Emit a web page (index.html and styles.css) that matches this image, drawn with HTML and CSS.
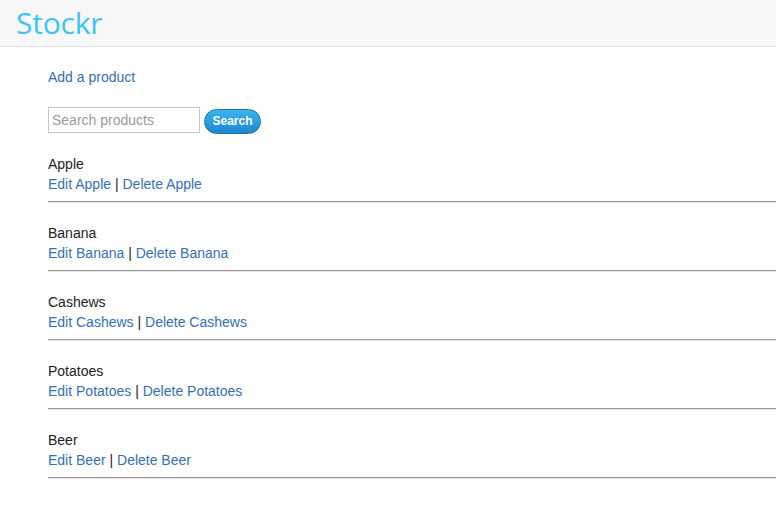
FILE: index.html
```html
<!DOCTYPE html>
<html>
<head>
<meta charset="utf-8">
<link rel="stylesheet" href="styles.css">
</head>
<body>
<header class="topbar"><span class="brand">Stockr</span></header>
<main class="content">
  <div class="add"><a href="#">Add a product</a></div>
  <form class="search">
    <input type="text" placeholder="Search products">
    <button type="button">Search</button>
  </form>
  <div class="item">
    <div class="name">Apple</div>
    <div class="links"><a href="#">Edit Apple</a> | <a href="#">Delete Apple</a></div>
    <hr>
  </div>
  <div class="item">
    <div class="name">Banana</div>
    <div class="links"><a href="#">Edit Banana</a> | <a href="#">Delete Banana</a></div>
    <hr>
  </div>
  <div class="item">
    <div class="name">Cashews</div>
    <div class="links"><a href="#">Edit Cashews</a> | <a href="#">Delete Cashews</a></div>
    <hr>
  </div>
  <div class="item">
    <div class="name">Potatoes</div>
    <div class="links"><a href="#">Edit Potatoes</a> | <a href="#">Delete Potatoes</a></div>
    <hr>
  </div>
  <div class="item">
    <div class="name">Beer</div>
    <div class="links"><a href="#">Edit Beer</a> | <a href="#">Delete Beer</a></div>
    <hr>
  </div>
</main>
</body>
</html>
```
FILE: styles.css
```css
html, body { margin: 0; padding: 0; background: #fff; }
body {
  font-family: "Liberation Sans", Arial, sans-serif;
  font-size: 14px;
  line-height: 20px;
  color: #222;
}
a { color: #3371b8; text-decoration: none; }
.topbar {
  height: 46px;
  background: #f7f7f7;
  border-bottom: 1px solid #e2e2e2;
  padding-left: 16px;
  display: flex;
  align-items: center;
}
.brand {
  font-family: "Open Sans", sans-serif;
  font-size: 30px;
  color: #3cc5f4;
  letter-spacing: -0.2px;
  line-height: 40px;
}
.content { padding: 20px 0 0 48px; }
.add { line-height: 20px; }
.search {
  margin: 20px 0 21px;
  display: flex;
  align-items: center;
  gap: 4px;
  height: 26px;
}
.search input {
  box-sizing: border-box;
  width: 152px;
  height: 26px;
  margin: 0;
  border: 1px solid #c8c8c8;
  padding: 2px 3px;
  font-family: "Liberation Sans", Arial, sans-serif;
  font-size: 14px;
  color: #222;
}
.search input::placeholder { color: #9a9a9a; }
.search button {
  box-sizing: border-box;
  height: 25px;
  width: 57px;
  margin-top: 2px;
  border: 1px solid #1b72b0;
  border-radius: 13px;
  background: linear-gradient(#3bb6ee, #1b86cf);
  color: #fff;
  font-family: "Liberation Sans", Arial, sans-serif;
  font-weight: bold;
  font-size: 12px;
  padding: 0;
}
.item .name, .item .links { line-height: 20px; }
.item hr {
  margin: 7px 0 20px;
  border: 0;
  border-top: 1px solid #9a9a9a;
  border-bottom: 1px solid #e6e6e6;
  height: 0;
}
```
